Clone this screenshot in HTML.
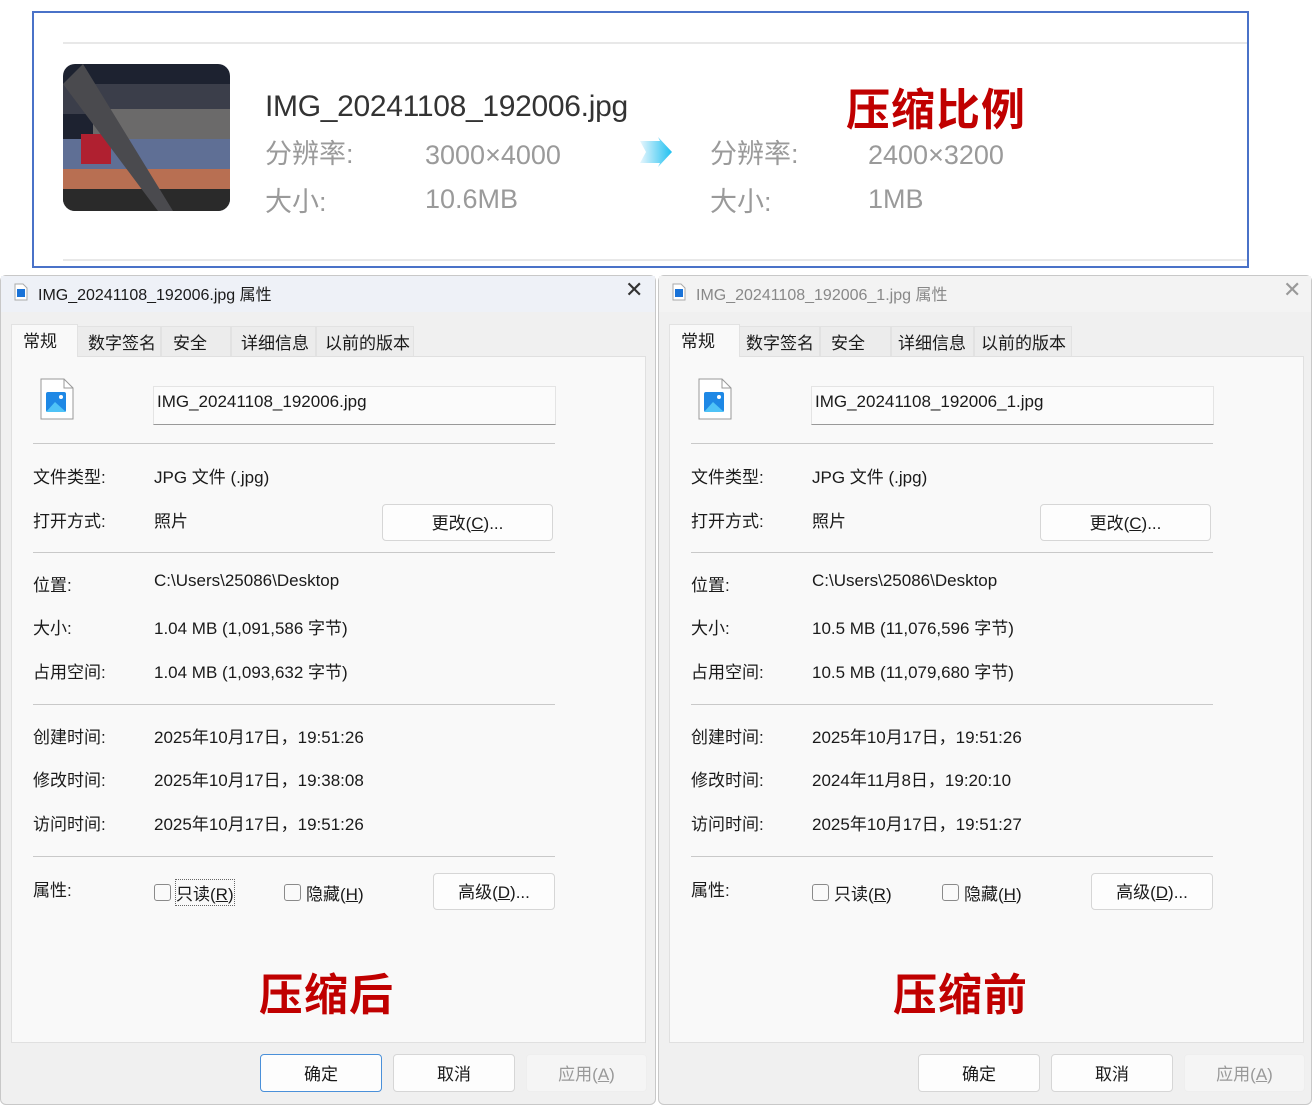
<!DOCTYPE html>
<html><head><meta charset="utf-8">
<style>
*{margin:0;padding:0;box-sizing:border-box}
body{width:1316px;height:1106px;background:#fff;position:relative;overflow:hidden;font-family:"Liberation Sans","Noto Sans CJK SC",sans-serif}
.a{position:absolute;white-space:nowrap}
.top{position:absolute;left:32px;top:11px;width:1217px;height:257px;border:2px solid #4a72c8}
.hl{position:absolute;height:2px;background:#e8e8e8}
.g{color:#9a9a9a;font-size:27px}
.red{color:#c00000;font-weight:bold;font-family:"Noto Sans CJK SC",sans-serif;font-size:44px;letter-spacing:1px}
.dlg{position:absolute;top:275px;width:656px;height:830px;background:#f0f0f0;border:1px solid #c8c8c8;border-radius:6px}
.title{position:absolute;left:0;top:0;width:100%;height:36px;font-size:16px;color:#1a1a1a}
.panel{position:absolute;left:10px;top:80px;width:635px;height:687px;background:#f9f9f9;border:1px solid #e0e0e0}
.tab{position:absolute;top:50px;height:30px;font-size:17px;color:#1a1a1a;padding:2px 0 0 0;background:#ececec;border:1px solid #e2e2e2;border-bottom:none;white-space:nowrap;overflow:hidden}
.t{position:absolute;font-size:17px;color:#1a1a1a;white-space:nowrap}
.r{margin-top:-4px}
.hr{position:absolute;left:32px;width:522px;height:1px;background:#c9c9c9}
.btn{position:absolute;background:#fdfdfd;border:1px solid #d6d6d6;border-radius:4px;font-size:17px;color:#1a1a1a;text-align:center;line-height:34px}
.cb{position:absolute;width:17px;height:17px;border:1px solid #8a8a8a;border-radius:3px;background:#fafafa}
u{text-decoration:underline}
</style></head><body>

<div class="top"></div>
<div class="hl" style="left:63px;top:42px;width:1184px"></div>
<div class="hl" style="left:63px;top:259px;width:1184px"></div>
<svg class="a" style="left:63px;top:64px" width="167" height="147">
<defs><clipPath id="c"><rect width="167" height="147" rx="12"/></clipPath></defs>
<g clip-path="url(#c)">
<rect width="167" height="147" fill="#1d2230"/>
<rect x="0" y="20" width="167" height="30" fill="#3b3e4a"/>
<rect x="30" y="45" width="137" height="35" fill="#6b6a6a"/>
<rect x="0" y="75" width="167" height="35" fill="#5f6f95"/>
<rect x="0" y="105" width="167" height="25" fill="#b86f52"/>
<rect x="0" y="125" width="167" height="22" fill="#2a2a2a"/>
<rect x="18" y="70" width="30" height="30" fill="#b02030"/>
<path d="M20 0 L110 147 L95 147 L0 20Z" fill="#4a4a4e"/>
</g></svg>
<div class="a" style="left:265px;top:90px;font-size:30px;color:#333;letter-spacing:-0.3px">IMG_20241108_192006.jpg</div>
<div class="a g" style="left:265px;top:132px">分辨率:</div>
<div class="a g" style="left:425px;top:140px">3000×4000</div>
<div class="a g" style="left:265px;top:180px">大小:</div>
<div class="a g" style="left:425px;top:184px">10.6MB</div>
<svg class="a" style="left:638px;top:137px" width="36" height="32"><defs><linearGradient id="ar"><stop offset="0" stop-color="#e8f6fd"/><stop offset="1" stop-color="#1ec0f0"/></linearGradient></defs><path d="M2 4 H22 L20 0 L34 15 L20 30 L22 26 H2 L8 15Z" fill="url(#ar)"/></svg>
<div class="a g" style="left:710px;top:132px">分辨率:</div>
<div class="a g" style="left:868px;top:140px">2400×3200</div>
<div class="a g" style="left:710px;top:180px">大小:</div>
<div class="a g" style="left:868px;top:184px">1MB</div>
<div class="a red" style="left:846px;top:74px">压缩比例</div>

<!-- LEFT DIALOG -->
<div class="dlg" style="left:0">
<div class="title" style="background:#eef1f7">
<svg class="a" style="left:13px;top:7px" width="14" height="18"><path d="M1 1H9L13 5V17H1Z" fill="#fff" stroke="#aaa"/><rect x="3" y="6" width="8" height="8" fill="#1a73d8"/></svg>
<div class="a" style="left:37px;top:5px">IMG_20241108_192006.jpg 属性</div>
<div class="a" style="left:624px;top:1px;font-size:22px;color:#333">✕</div>
</div>
<div class="panel"></div>
<div class="tab" style="left:10px;top:48px;width:67px;height:33px;background:#f9f9f9;padding-left:11px">常规</div>
<div class="tab" style="left:77px;width:83px;padding-left:10px;border-left:none">数字签名</div>
<div class="tab" style="left:160px;width:70px;padding-left:11px">安全</div>
<div class="tab" style="left:230px;width:85px;padding-left:9px">详细信息</div>
<div class="tab" style="left:315px;width:98px;padding-left:8px">以前的版本</div>
<svg class="a" style="left:39px;top:102px" width="34" height="42"><path d="M1 1H24L33 10V41H1Z" fill="#fff" stroke="#999"/><path d="M24 1V10H33" fill="none" stroke="#999"/><rect x="6" y="14" width="20" height="20" rx="2" fill="#1e88e5"/><path d="M6 34 L15 24 L26 34Z" fill="#4fc3f7"/><circle cx="21" cy="19" r="2" fill="#fff"/></svg>
<div class="a" style="left:152px;top:110px;width:403px;height:39px;background:#fbfbfb;border:1px solid #e4e4e4;border-bottom:1px solid #999"></div>
<div class="t" style="left:156px;top:116px">IMG_20241108_192006.jpg</div>
<div class="hr" style="top:167px"></div>
<div class="t r" style="left:32px;top:191px">文件类型:</div><div class="t r" style="left:153px;top:191px">JPG 文件 (.jpg)</div>
<div class="t r" style="left:32px;top:235px">打开方式:</div><div class="t r" style="left:153px;top:235px">照片</div>
<div class="btn" style="left:381px;top:228px;width:171px;height:37px;line-height:37px">更改(<u>C</u>)...</div>
<div class="hr" style="top:276px"></div>
<div class="t r" style="left:32px;top:299px">位置:</div><div class="t r" style="left:153px;top:299px">C:\Users\25086\Desktop</div>
<div class="t r" style="left:32px;top:342px">大小:</div><div class="t r" style="left:153px;top:342px">1.04 MB (1,091,586 字节)</div>
<div class="t r" style="left:32px;top:386px">占用空间:</div><div class="t r" style="left:153px;top:386px">1.04 MB (1,093,632 字节)</div>
<div class="hr" style="top:428px"></div>
<div class="t r" style="left:32px;top:451px">创建时间:</div><div class="t r" style="left:153px;top:451px">2025年10月17日，19:51:26</div>
<div class="t r" style="left:32px;top:494px">修改时间:</div><div class="t r" style="left:153px;top:494px">2025年10月17日，19:38:08</div>
<div class="t r" style="left:32px;top:538px">访问时间:</div><div class="t r" style="left:153px;top:538px">2025年10月17日，19:51:26</div>
<div class="hr" style="top:580px"></div>
<div class="t" style="left:32px;top:600px">属性:</div>
<div class="cb" style="left:153px;top:608px"></div><div class="t" style="left:175px;top:604px;outline:1px dotted #666">只读(<u>R</u>)</div>
<div class="cb" style="left:283px;top:608px"></div><div class="t" style="left:305px;top:604px">隐藏(<u>H</u>)</div>
<div class="btn" style="left:432px;top:597px;width:122px;height:37px;line-height:37px">高级(<u>D</u>)...</div>
<div class="a red" style="left:258px;top:683px">压缩后</div>
<div class="btn" style="left:259px;top:778px;width:122px;height:38px;line-height:40px;border:1px solid #4a90d9">确定</div>
<div class="btn" style="left:392px;top:778px;width:122px;height:38px;line-height:40px">取消</div>
<div class="btn" style="left:525px;top:778px;width:121px;height:38px;line-height:40px;background:#f5f5f5;border-color:#eee;color:#999">应用(<u>A</u>)</div>
</div>

<!-- RIGHT DIALOG -->
<div class="dlg" style="left:658px;width:654px">
<div class="title" style="background:#f3f3f3;color:#888">
<svg class="a" style="left:13px;top:7px" width="14" height="18"><path d="M1 1H9L13 5V17H1Z" fill="#fff" stroke="#aaa"/><rect x="3" y="6" width="8" height="8" fill="#1a73d8"/></svg>
<div class="a" style="left:37px;top:5px;color:#888">IMG_20241108_192006_1.jpg 属性</div>
<div class="a" style="left:624px;top:1px;font-size:22px;color:#999">✕</div>
</div>
<div class="panel"></div>
<div class="tab" style="left:10px;top:48px;width:71px;height:33px;background:#f9f9f9;padding-left:11px">常规</div>
<div class="tab" style="left:81px;width:80px;padding-left:6px;border-left:none">数字签名</div>
<div class="tab" style="left:161px;width:71px;padding-left:10px">安全</div>
<div class="tab" style="left:232px;width:83px;padding-left:6px">详细信息</div>
<div class="tab" style="left:315px;width:98px;padding-left:6px">以前的版本</div>
<svg class="a" style="left:39px;top:102px" width="34" height="42"><path d="M1 1H24L33 10V41H1Z" fill="#fff" stroke="#999"/><path d="M24 1V10H33" fill="none" stroke="#999"/><rect x="6" y="14" width="20" height="20" rx="2" fill="#1e88e5"/><path d="M6 34 L15 24 L26 34Z" fill="#4fc3f7"/><circle cx="21" cy="19" r="2" fill="#fff"/></svg>
<div class="a" style="left:152px;top:110px;width:403px;height:39px;background:#fbfbfb;border:1px solid #e4e4e4;border-bottom:1px solid #999"></div>
<div class="t" style="left:156px;top:116px">IMG_20241108_192006_1.jpg</div>
<div class="hr" style="top:167px"></div>
<div class="t r" style="left:32px;top:191px">文件类型:</div><div class="t r" style="left:153px;top:191px">JPG 文件 (.jpg)</div>
<div class="t r" style="left:32px;top:235px">打开方式:</div><div class="t r" style="left:153px;top:235px">照片</div>
<div class="btn" style="left:381px;top:228px;width:171px;height:37px;line-height:37px">更改(<u>C</u>)...</div>
<div class="hr" style="top:276px"></div>
<div class="t r" style="left:32px;top:299px">位置:</div><div class="t r" style="left:153px;top:299px">C:\Users\25086\Desktop</div>
<div class="t r" style="left:32px;top:342px">大小:</div><div class="t r" style="left:153px;top:342px">10.5 MB (11,076,596 字节)</div>
<div class="t r" style="left:32px;top:386px">占用空间:</div><div class="t r" style="left:153px;top:386px">10.5 MB (11,079,680 字节)</div>
<div class="hr" style="top:428px"></div>
<div class="t r" style="left:32px;top:451px">创建时间:</div><div class="t r" style="left:153px;top:451px">2025年10月17日，19:51:26</div>
<div class="t r" style="left:32px;top:494px">修改时间:</div><div class="t r" style="left:153px;top:494px">2024年11月8日，19:20:10</div>
<div class="t r" style="left:32px;top:538px">访问时间:</div><div class="t r" style="left:153px;top:538px">2025年10月17日，19:51:27</div>
<div class="hr" style="top:580px"></div>
<div class="t" style="left:32px;top:600px">属性:</div>
<div class="cb" style="left:153px;top:608px"></div><div class="t" style="left:175px;top:604px">只读(<u>R</u>)</div>
<div class="cb" style="left:283px;top:608px"></div><div class="t" style="left:305px;top:604px">隐藏(<u>H</u>)</div>
<div class="btn" style="left:432px;top:597px;width:122px;height:37px;line-height:37px">高级(<u>D</u>)...</div>
<div class="a red" style="left:234px;top:683px">压缩前</div>
<div class="btn" style="left:259px;top:778px;width:122px;height:38px;line-height:40px">确定</div>
<div class="btn" style="left:392px;top:778px;width:122px;height:38px;line-height:40px">取消</div>
<div class="btn" style="left:525px;top:778px;width:121px;height:38px;line-height:40px;background:#f5f5f5;border-color:#eee;color:#999">应用(<u>A</u>)</div>
</div>
</body></html>
